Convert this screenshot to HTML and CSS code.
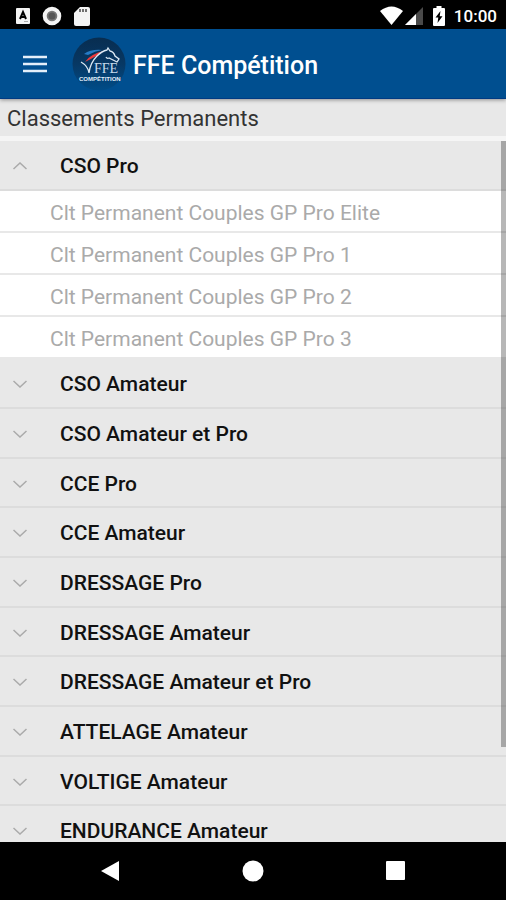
FILE: index.html
```html
<!DOCTYPE html>
<html lang="fr">
<head>
<meta charset="utf-8">
<meta name="viewport" content="width=device-width, initial-scale=1">
<title>FFE Compétition</title>
<link rel="stylesheet" href="styles.css">
</head>
<body>
<div class="status-bar">
  <div class="status-group notifications">
    <svg width="14" height="16" viewBox="0 0 14 16" aria-hidden="true"><rect width="14" height="16" rx="1" fill="#f4f4f4"/><path d="M4 11 L7 4 L10 11 M5 9 H9" fill="none" stroke="#000" stroke-width="2"/><path d="M8 13.5 H12" stroke="#aaa"/></svg>
    <svg width="20" height="20" viewBox="0 0 20 20" aria-hidden="true"><circle cx="10" cy="10" r="7.300" fill="#777" stroke="#f4f4f4" stroke-width="4"/><circle cx="10" cy="10" r="3.500" fill="#555"/></svg>
    <svg width="16" height="20" viewBox="0 0 16 20" aria-hidden="true"><path d="M6 1H14Q16 1 16 3V18Q16 20 14 20H2Q0 20 0 18V7Z" fill="#f4f4f4"/><path d="M6 3V6M9 3V6M12 3V6" stroke="#444" stroke-width="1.5"/></svg>
  </div>
  <div class="status-group system">
    <svg width="23" height="19" viewBox="0 0 23 19" aria-hidden="true"><path d="M0 5Q11.500 -4 23 5L11.500 19Z" fill="#fff"/></svg>
    <svg width="18" height="19" viewBox="0 0 18 19" aria-hidden="true"><path d="M18 1V19H0Z" fill="#4a4a4a"/><path d="M11 8V19H0Z" fill="#fff"/></svg>
    <svg class="battery" width="12" height="20" viewBox="0 0 12 20" aria-hidden="true"><path d="M3.500 0H8.500V2H11Q12 2 12 3V19Q12 20 11 20H1Q0 20 0 19V3Q0 2 1 2H3.500Z" fill="#fff"/><path d="M7.500 5L2.500 11.500H5.300L4.500 17L9.500 10.200H6.700Z" fill="#000"/></svg>
    <time class="clock">10:00</time>
  </div>
</div>
<header class="app-bar">
  <button class="menu-button" type="button" aria-label="Menu">
    <svg width="24" height="18" viewBox="0 0 24 18" aria-hidden="true"><path d="M0 2H24M0 9H24M0 16H24" stroke="#e4effa" stroke-width="2.700"/></svg>
  </button>
  <svg class="logo" width="54" height="54" viewBox="0 0 54 54" role="img" aria-label="FFE Compétition">
    <defs><linearGradient id="disc" x1="0" y1="0" x2="0" y2="1"><stop offset="0" stop-color="#082d50"/><stop offset=".5" stop-color="#073864"/><stop offset="1" stop-color="#004c88"/></linearGradient></defs>
    <circle cx="27" cy="27" r="26.500" fill="url(#disc)"/>
    <path d="M12 17Q19 12 30 13Q23 14 16 18Z" fill="#267bc5"/>
    <path d="M13 25Q18 17 32 14Q25 19 13 25Z" fill="#ed393c"/>
    <path d="M17 36Q18 26 25 19Q30 14 35 13L36 11L38 14Q42 15 43 19L47 22L45 25L37 21Q35 22 34 20M17 36Q16 29 9 25" fill="none" stroke="#dce9f4" stroke-width="1.300"/>
    <text class="logo-initials" x="22" y="36" fill="#c7dbed">FFE</text>
    <text class="logo-caption" x="7" y="44" fill="#e1edf8">COMPÉTITION</text>
  </svg>
  <h1 class="app-title">FFE Compétition</h1>
</header>
<h2 class="page-heading">Classements Permanents</h2>
<main class="rankings">
  <section class="group">
    <button class="group-toggle" type="button" aria-expanded="true" aria-controls="cso-pro"><svg class="chevron" viewBox="0 0 14 8" aria-hidden="true"><path d="M0.500 7L7 1L13.500 7"/></svg>CSO Pro</button>
    <ul class="ranking-list" id="cso-pro">
      <li><a href="#elite">Clt Permanent Couples GP Pro Elite</a></li>
      <li><a href="#pro1">Clt Permanent Couples GP Pro 1</a></li>
      <li><a href="#pro2">Clt Permanent Couples GP Pro 2</a></li>
      <li><a href="#pro3">Clt Permanent Couples GP Pro 3</a></li>
    </ul>
  </section>
  <div class="collapsed-groups">
    <button class="group-toggle" type="button" aria-expanded="false"><svg class="chevron" viewBox="0 0 14 8" aria-hidden="true"><path d="M0.500 1L7 7L13.500 1"/></svg>CSO Amateur</button>
    <button class="group-toggle" type="button" aria-expanded="false"><svg class="chevron" viewBox="0 0 14 8" aria-hidden="true"><path d="M0.500 1L7 7L13.500 1"/></svg>CSO Amateur et Pro</button>
    <button class="group-toggle" type="button" aria-expanded="false"><svg class="chevron" viewBox="0 0 14 8" aria-hidden="true"><path d="M0.500 1L7 7L13.500 1"/></svg>CCE Pro</button>
    <button class="group-toggle" type="button" aria-expanded="false"><svg class="chevron" viewBox="0 0 14 8" aria-hidden="true"><path d="M0.500 1L7 7L13.500 1"/></svg>CCE Amateur</button>
    <button class="group-toggle" type="button" aria-expanded="false"><svg class="chevron" viewBox="0 0 14 8" aria-hidden="true"><path d="M0.500 1L7 7L13.500 1"/></svg>DRESSAGE Pro</button>
    <button class="group-toggle" type="button" aria-expanded="false"><svg class="chevron" viewBox="0 0 14 8" aria-hidden="true"><path d="M0.500 1L7 7L13.500 1"/></svg>DRESSAGE Amateur</button>
    <button class="group-toggle" type="button" aria-expanded="false"><svg class="chevron" viewBox="0 0 14 8" aria-hidden="true"><path d="M0.500 1L7 7L13.500 1"/></svg>DRESSAGE Amateur et Pro</button>
    <button class="group-toggle" type="button" aria-expanded="false"><svg class="chevron" viewBox="0 0 14 8" aria-hidden="true"><path d="M0.500 1L7 7L13.500 1"/></svg>ATTELAGE Amateur</button>
    <button class="group-toggle" type="button" aria-expanded="false"><svg class="chevron" viewBox="0 0 14 8" aria-hidden="true"><path d="M0.500 1L7 7L13.500 1"/></svg>VOLTIGE Amateur</button>
    <button class="group-toggle" type="button" aria-expanded="false"><svg class="chevron" viewBox="0 0 14 8" aria-hidden="true"><path d="M0.500 1L7 7L13.500 1"/></svg>ENDURANCE Amateur</button>
  </div>
  <div class="scroll-thumb"></div>
</main>
<nav class="system-nav" aria-label="Navigation">
  <button type="button" aria-label="Retour"><svg width="22" height="22" viewBox="0 0 22 22" aria-hidden="true"><path d="M2 11L20 1V21Z" fill="#fff"/></svg></button>
  <button type="button" aria-label="Accueil"><svg width="22" height="22" viewBox="0 0 22 22" aria-hidden="true"><circle cx="11" cy="11" r="10.500" fill="#fff"/></svg></button>
  <button type="button" aria-label="Applications récentes"><svg width="22" height="22" viewBox="0 0 22 22" aria-hidden="true"><rect x="1" y="1" width="19" height="19" rx="1" fill="#fff"/></svg></button>
</nav>
</body>
</html>
```
FILE: styles.css
```css
* {
  box-sizing: border-box;
}

body {
  display: flex;
  flex-direction: column;
  height: 100vh;
  margin: 0;
  overflow: hidden;
  background: #f5f5f5;
  color: #111;
  font-family: Roboto, "Liberation Sans", sans-serif;
}

button {
  margin: 0;
  padding: 0;
  border: 0;
  background: none;
  color: inherit;
  font: inherit;
}

svg {
  display: block;
  flex: none;
}

.status-bar {
  display: flex;
  flex: none;
  align-items: center;
  justify-content: space-between;
  height: 29px;
  padding: 2px 9px 0 16px;
  background: #000;
  color: #fff;
}

.status-group {
  display: flex;
  align-items: center;
}

.notifications {
  gap: 12px;
}

.system {
  gap: 2px;
}

.battery {
  margin: 0 7px 0 8px;
}

.clock {
  font-size: 17px;
  font-weight: 500;
}

.app-bar {
  display: flex;
  position: relative;
  flex: none;
  align-items: center;
  height: 70px;
  padding: 1px 23px 0;
  border-bottom: 1px solid #003b83;
  background: #004f90;
  box-shadow: 0 1px 4px #0006;
  color: #fff;
}

.logo {
  margin: 0 7px 0 25px;
}

.logo-initials {
  font: 14px "Liberation Serif", serif;
}

.logo-caption {
  font: bold 6px "Liberation Sans", sans-serif;
}

.app-title {
  margin: 0;
  padding-top: 3px;
  font-size: 25px;
  font-weight: 500;
}

.page-heading {
  flex: none;
  margin: 0 0 5px;
  padding: 2px 7px 0;
  background: #e8e8e8;
  color: #333;
  font-size: 22px;
  font-weight: 400;
  line-height: 35px;
}

.rankings {
  position: relative;
  flex: 1;
  min-height: 0;
  overflow: hidden;
  background: #e8e8e8;
}

.group-toggle {
  display: flex;
  align-items: center;
  gap: 33px;
  width: 100%;
  height: 50px;
  padding: 2px 13px 0;
  border-bottom: 2px solid #dcdcdc;
  font-size: 21px;
  font-weight: 500;
  text-align: left;
}

.collapsed-groups .group-toggle:nth-child(3n) {
  height: 49px;
}

.chevron {
  width: 14px;
  height: 8px;
  fill: none;
  stroke: #aaa;
  stroke-width: 1.5px;
}

.ranking-list {
  margin: 0;
  padding: 0;
  background: #fff;
  list-style: none;
}

.ranking-list a {
  display: block;
  height: 42px;
  padding: 0 50px;
  border-bottom: 2px solid #e8e8e8;
  color: #aaa;
  font-size: 21px;
  line-height: 44px;
  text-decoration: none;
}

.scroll-thumb {
  position: absolute;
  top: 0;
  right: 0;
  width: 5px;
  height: 86.5%;
  background: #00000048;
}

.system-nav {
  display: flex;
  flex: none;
  align-items: center;
  justify-content: space-around;
  height: 58px;
  padding: 0 39px;
  background: #000;
}
```
